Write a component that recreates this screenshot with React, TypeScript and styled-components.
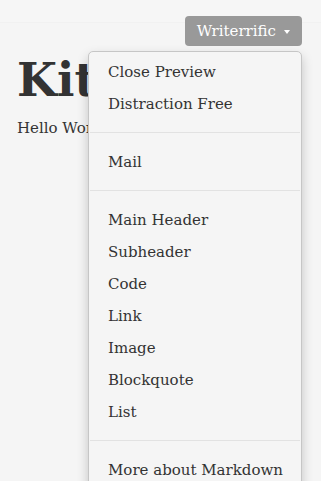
import { Fragment } from "react";
import styled, { createGlobalStyle } from "styled-components";

const GlobalStyle = createGlobalStyle`
  html, body {
    margin: 0;
    padding: 0;
    background: #f5f5f5;
  }
  body {
    font-family: "DejaVu Serif", Georgia, serif;
    color: #333;
  }
`;

const Page = styled.div`
  width: 321px;
  height: 481px;
  overflow: hidden;
  position: relative;
  background: #f5f5f5;
`;

const TopBar = styled.div`
  height: 22px;
  border-bottom: 1px solid #f1f1f1;
  background: #f6f6f6;
`;

const Toolbar = styled.div`
  display: flex;
  justify-content: flex-end;
  padding: 0 19px 0 0;
  margin-top: -7px;
`;

const Dropdown = styled.div`
  position: relative;
`;

const ToggleButton = styled.button`
  display: flex;
  align-items: center;
  gap: 8px;
  height: 30px;
  padding: 0 12px;
  border: none;
  border-radius: 4px;
  background: #999;
  color: #fff;
  font-family: "DejaVu Serif", Georgia, serif;
  font-size: 15px;
`;

const Caret = styled.span`
  width: 0;
  height: 0;
  border-left: 3px solid transparent;
  border-right: 3px solid transparent;
  border-top: 4px solid #fff;
  margin-top: 2px;
`;

const Menu = styled.ul`
  position: absolute;
  top: 35px;
  right: 0;
  width: 214px;
  height: 480px;
  margin: 0;
  padding: 4px 0;
  list-style: none;
  background: #f5f5f5;
  border: 1px solid #c6c6c6;
  border-radius: 5px;
  box-shadow: 0 5px 12px rgba(0, 0, 0, 0.2);
  box-sizing: border-box;
`;

const MenuItem = styled.li`
  height: 32px;
  line-height: 32px;
  padding: 0 20px 0 19px;
  font-size: 15px;
  color: #333;
  white-space: nowrap;
`;

const Divider = styled.li`
  height: 1px;
  margin: 12px 1px 13px;
  background: #e2e2e2;
`;

const Content = styled.div`
  padding: 0 17px;
`;

const Title = styled.h1`
  margin: 4px 0 0;
  font-size: 46px;
  line-height: 60px;
  font-weight: bold;
  color: #333;
`;

const Text = styled.p`
  margin: 8px 0 0;
  font-size: 15px;
  line-height: 20px;
`;

const groups = [
  ["Close Preview", "Distraction Free"],
  ["Mail"],
  ["Main Header", "Subheader", "Code", "Link", "Image", "Blockquote", "List"],
  ["More about Markdown"],
];

export default function App() {
  return (
    <Page>
      <GlobalStyle />
      <TopBar />
      <Toolbar>
        <Dropdown>
          <ToggleButton>
            Writerrific
            <Caret />
          </ToggleButton>
          <Menu>
            {groups.map((items, i) => (
              <Fragment key={i}>
                {i > 0 && <Divider />}
                {items.map((label) => (
                  <MenuItem key={label}>{label}</MenuItem>
                ))}
              </Fragment>
            ))}
          </Menu>
        </Dropdown>
      </Toolbar>
      <Content>
        <Title>Kitten</Title>
        <Text>Hello World</Text>
      </Content>
    </Page>
  );
}
